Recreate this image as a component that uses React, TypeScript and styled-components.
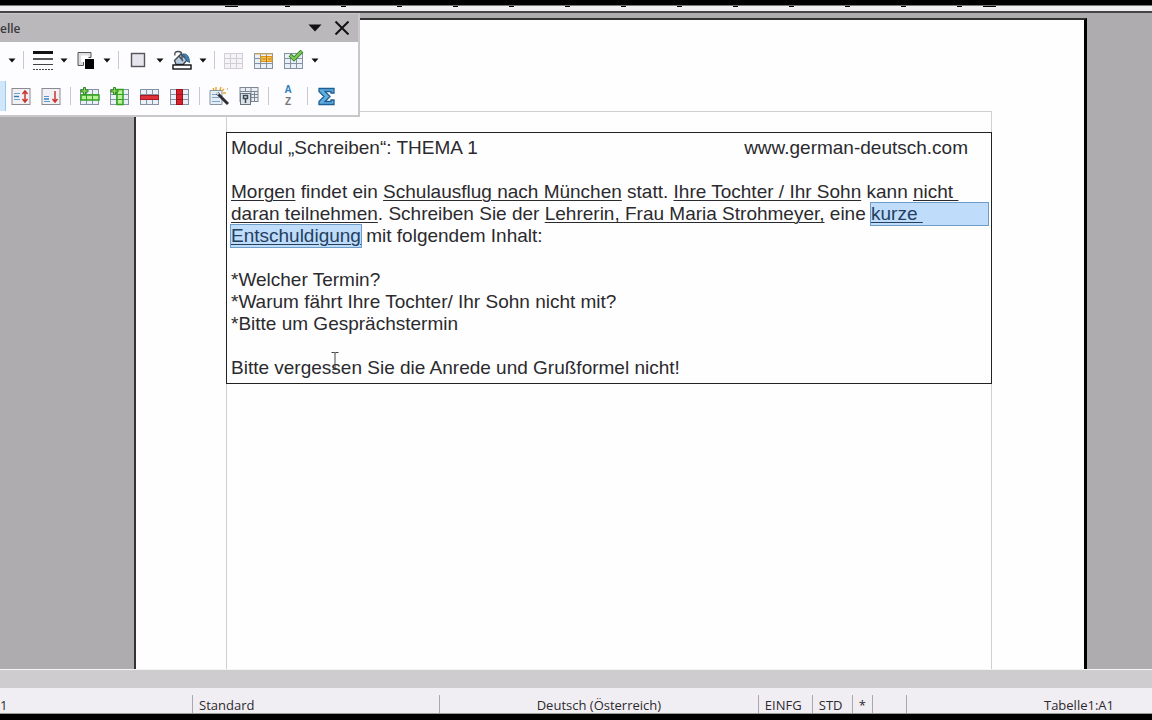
import React from "react";
import styled, { createGlobalStyle } from "styled-components";

const GlobalStyle = createGlobalStyle`
  * { box-sizing: border-box; }
  body { margin: 0; background: #000; }
`;

const uiFont = `"Open Sans", "Noto Sans", sans-serif`;

const Window = styled.div`
  position: relative;
  display: flex;
  flex-direction: column;
  min-height: 100vh;
  overflow: hidden;
  background: #aeacae;
  border-top: 5px solid #000;
  border-bottom: 6px solid #000;
`;

const Ruler = styled.div`
  height: 8px;
  flex: none;
  background: #f0eef0;
  border-top: 1px solid #777;
  border-bottom: 2px solid #444;
`;

const RulerMarks = styled.svg`
  display: block;
  width: 100%;
  height: 2px;
`;

const Workspace = styled.main`
  flex: 1;
  display: flex;
  padding: 5px 65px 0 134px;
  border-bottom: 1px solid #f4f4f4;
`;

const Sheet = styled.article`
  flex: 1;
  display: flex;
  padding: 91px 92px 0 90px;
  background: #fefefe;
  border: solid #333;
  border-width: 2px 3px 0 2px;
  border-right-color: #000;
`;

const TextArea = styled.div`
  flex: 1;
  padding-top: 20px;
  border: 1px solid #cfcfcf;
  border-bottom: 0;
`;

const TextTable = styled.table`
  width: calc(100% + 2px);
  margin: 0 -1px;
  border-collapse: separate;
  border-spacing: 0;
  border: 1px solid #222;
`;

const Cell = styled.td`
  padding: 4px 3px 4px 4px;
  font: 19px/22px "Liberation Sans", Arial, sans-serif;
  color: #2b2a2e;
`;

const Line = styled.p`
  display: flex;
  height: 22px;
  margin: 0;
  white-space: pre;
`;

const Site = styled.span`
  margin-left: auto;
  margin-right: 20px;
`;

const U = styled.span`
  text-decoration: underline;
  text-decoration-thickness: 1px;
  text-underline-offset: 2px;
`;

const Selected = styled.mark<{ $fill?: boolean }>`
  flex: ${(p) => (p.$fill ? "1" : "none")};
  color: #23405f;
  background: #bfdcfb;
  box-shadow: 0 0 0 1px #6d9cc8;
`;

const ScrollTrack = styled.div`
  height: 18px;
  flex: none;
  background: #cecccf;
`;

const StatusBar = styled.footer`
  display: flex;
  flex: none;
  height: 26px;
  padding-top: 7px;
  background: #f1eef3;
  border-bottom: 1px solid #999;
  font: 13px/20px ${uiFont};
  color: #2c2a2e;
  white-space: nowrap;
`;

const StatusCell = styled.div<{ $w?: number; $grow?: number; $align?: string }>`
  flex: ${(p) => (p.$grow ? `${p.$grow} 1 0` : `0 0 ${p.$w}px`)};
  padding: 0 6px;
  text-align: ${(p) => p.$align ?? "left"};
  border-right: 1px solid #aaa8ac;
  &:first-child { padding-left: 0; }
  &:last-child { padding-right: 38px; border-right: 0; }
`;

const FloatingToolbar = styled.section`
  position: absolute;
  left: 0;
  top: 8px;
  width: 360px;
  padding-bottom: 1px;
  background: #fdfcfe;
  border: solid #c9c7ca;
  border-width: 1px 2px 2px 0;
`;

const TitleBar = styled.header`
  display: flex;
  align-items: center;
  height: 28px;
  padding-right: 3px;
  background: #bab8bb;
`;

const Title = styled.h1`
  flex: 1;
  margin: 0;
  padding-top: 2px;
  font: 600 12px/20px ${uiFont};
  color: #3a383c;
`;

const TitleButton = styled.button`
  display: flex;
  align-items: center;
  justify-content: center;
  width: 27px;
  height: 24px;
  padding: 0;
  border: 0;
  background: none;
`;

const ToolRow = styled.div<{ $indent?: number }>`
  display: flex;
  align-items: center;
  height: 36px;
  padding-left: ${(p) => p.$indent ?? 0}px;
`;

const ToolButton = styled.button<{ $w?: number }>`
  display: flex;
  align-items: center;
  justify-content: center;
  flex: none;
  width: ${(p) => p.$w ?? 30}px;
  height: 30px;
  padding: 0;
  border: 0;
  background: none;
`;

const ActiveButton = styled(ToolButton)`
  background: #cfe6fb;
  border-right: 1px solid #9cc6ec;
`;

const SortButton = styled(ToolButton)`
  flex-direction: column;
`;

const SortLetter = styled.span<{ $color: string }>`
  display: block;
  font: 700 10px/12px "Liberation Sans", Arial, sans-serif;
  color: ${(p) => p.$color};
`;

const Divider = styled.span`
  width: 1px;
  height: 18px;
  margin: 0 4px;
  background: #cac8cc;
`;

const Pointer = styled.svg`
  position: absolute;
  left: 330px;
  top: 340px;
`;

const ticks = Array.from({ length: 13 }, (_, i) => `M${285 + i * 56} 0.5h5`).join("");

const DropArrow = ({ label }: { label: string }) => (
  <ToolButton $w={14} aria-label={label}>
    <svg width="8" height="5" viewBox="0 0 8 5"><path d="M0.5 0.5h7L4 4.500z" fill="#111" /></svg>
  </ToolButton>
);

const Icon = ({ children }: { children: React.ReactNode }) => (
  <svg width="20" height="20" viewBox="0 0 20 20" fill="none">{children}</svg>
);

const Grid = ({ line = "#8492a2", fill = "#e9f0f7" }: { line?: string; fill?: string }) => (
  <>
    <rect x="0.5" y="3.5" width="18" height="15" fill={fill} stroke={line} />
    <path d="M1 8.500h18M1 13.500h18M6.500 3v15M12.500 3v15" stroke={line} />
  </>
);

const Plus = () => (
  <path d="M3.500 1.500h2v2.500h2.500v2H5.500v2.500h-2V6H1V4h2.500z" fill="#8fd65c" stroke="#2f8a1e" />
);

const TableToolbar = () => (
  <FloatingToolbar aria-label="Tabelle">
    <TitleBar>
      <Title>elle</Title>
      <TitleButton aria-label="Menü">
        <svg width="14" height="8" viewBox="0 0 14 8"><path d="M0.500 0.500h13L7 7.500z" fill="#111" /></svg>
      </TitleButton>
      <TitleButton aria-label="Schließen">
        <svg width="16" height="14" viewBox="0 0 16 14"><path d="M1.500 0.500l13 13M14.500 0.500l-13 13" stroke="#111" strokeWidth="2" /></svg>
      </TitleButton>
    </TitleBar>
    <ToolRow $indent={5}>
      <DropArrow label="Tabelle einfügen" />
      <Divider />
      <ToolButton $w={29} aria-label="Umrandungsstil">
        <Icon>
          <path d="M0 2.500h20" stroke="#111" strokeWidth="3" />
          <path d="M0 9h20" stroke="#555" strokeWidth="2" />
          <path d="M0 14.500h20" stroke="#444" />
          <path d="M0 19.500h20" stroke="#444" strokeDasharray="2 1" />
        </Icon>
      </ToolButton>
      <DropArrow label="Umrandungsstil wählen" />
      <ToolButton $w={29} aria-label="Umrandungsfarbe">
        <Icon>
          <path d="M2 2.500h13v5H7.500v8H2z" fill="#dfdde2" stroke="#555" />
          <path d="M5 5.500h7.500V8H8v4H5z" fill="#fff" />
          <rect x="9" y="9" width="9" height="10" fill="#000" />
        </Icon>
      </ToolButton>
      <DropArrow label="Farbe wählen" />
      <Divider />
      <ToolButton $w={30} aria-label="Umrandung">
        <Icon><rect x="3.500" y="3.500" width="13" height="13" fill="#e6e4ec" stroke="#555" strokeWidth="1.400" /></Icon>
      </ToolButton>
      <DropArrow label="Umrandung wählen" />
      <ToolButton $w={29} aria-label="Hintergrundfarbe">
        <Icon>
          <path d="M2.500 10.500L9 4l6 6-4 4.500H4z" fill="#b6cadc" stroke="#3c4650" strokeWidth="1.300" />
          <path d="M3 5.500Q2 1.500 6 1.500t4 3.500v4M7 6l4 5" stroke="#444c55" strokeWidth="1.300" />
          <path d="M11 4q6-1 6.500 8.500-3-1-4-4z" fill="#3f81b8" stroke="#2f5f87" />
          <rect x="1" y="15" width="18" height="4" fill="#fff" stroke="#111" strokeWidth="1.400" />
        </Icon>
      </ToolButton>
      <DropArrow label="Hintergrund wählen" />
      <Divider />
      <ToolButton disabled aria-label="Zellen verbinden"><Icon><Grid line="#d2cfd4" fill="#f5f3f6" /></Icon></ToolButton>
      <ToolButton aria-label="Zellen teilen">
        <Icon>
          <Grid />
          <rect x="7" y="6.500" width="11" height="5" fill="#f8c24a" stroke="#dd9416" />
          <path d="M0.500 4h18" stroke="#e3b04e" />
          <path d="M12.500 6v6M8.500 9h3M14 9h3" stroke="#b8780f" />
        </Icon>
      </ToolButton>
      <ToolButton $w={29} aria-label="Tabelle optimieren">
        <Icon>
          <Grid />
          <path d="M6 5l4 4L18 1" stroke="#3c8a2d" strokeWidth="4" />
          <path d="M6.500 5.500L10 9l7.500-7.500" stroke="#80c958" strokeWidth="2" />
        </Icon>
      </ToolButton>
      <DropArrow label="Optimieren wählen" />
    </ToolRow>
    <ToolRow>
      <ActiveButton $w={6} aria-label="Oben" />
      <ToolButton aria-label="Vertikal zentrieren">
        <Icon>
          <rect x="1" y="2.500" width="18" height="16" fill="#f1f0f4" stroke="#8c8a90" />
          <path d="M3 7.500h6M3 13.500h6" stroke="#6aa5d6" />
          <path d="M3 10.500h5" stroke="#2c78b8" strokeWidth="1.400" />
          <path d="M14 5v11M11.500 8L14 5l2.500 3M11.500 13l2.500 3 2.500-3" stroke="#c9362d" strokeWidth="1.500" />
        </Icon>
      </ToolButton>
      <ToolButton aria-label="Unten">
        <Icon>
          <rect x="1" y="2.500" width="18" height="16" fill="#f1f0f4" stroke="#8c8a90" />
          <path d="M3 10.500h5M3 15.500h6" stroke="#5a9ad0" />
          <path d="M3 13h5" stroke="#2c78b8" strokeWidth="1.400" />
          <path d="M14 5v11M11.500 13l2.500 3 2.500-3" stroke="#c9362d" strokeWidth="1.500" />
        </Icon>
      </ToolButton>
      <Divider />
      <ToolButton aria-label="Zeile einfügen">
        <Icon>
          <Grid />
          <rect x="1" y="9" width="18" height="5" fill="#b9ee9a" stroke="#2fa31c" strokeWidth="1.500" />
          <path d="M6.500 9v5M12.500 9v5" stroke="#2fa31c" />
          <Plus />
        </Icon>
      </ToolButton>
      <ToolButton aria-label="Spalte einfügen">
        <Icon>
          <Grid />
          <rect x="7" y="3.500" width="6" height="15" fill="#b9ee9a" stroke="#2fa31c" strokeWidth="1.500" />
          <path d="M7 8.500h6M7 13.500h6" stroke="#2fa31c" />
          <Plus />
        </Icon>
      </ToolButton>
      <ToolButton aria-label="Zeile löschen">
        <Icon>
          <Grid />
          <rect x="0.500" y="9.500" width="18" height="4" fill="#e0303a" stroke="#ac1822" />
        </Icon>
      </ToolButton>
      <ToolButton aria-label="Spalte löschen">
        <Icon>
          <Grid />
          <rect x="6.500" y="3.500" width="6" height="15" fill="#d8202a" stroke="#9f1019" />
          <path d="M7 8.500h6M7 13.500h6" stroke="#9f1019" />
        </Icon>
      </ToolButton>
      <Divider />
      <ToolButton aria-label="AutoFormat">
        <Icon>
          <path d="M1 4.500h12v14H1z" fill="#e4edf6" stroke="#8795a4" />
          <path d="M3 8.500h5M3 11.500h7M3 15.500h8" stroke="#7fa5c8" />
          <path d="M8 7l11 11" stroke="#2d2d33" strokeWidth="3" />
          <path d="M7.500 6.500l2 2" stroke="#d8d6dc" strokeWidth="2" />
          <path d="M7 1v3M12 1l-1 3M15 3l-2 2M17 7h-3M4 2l1 2M18 3h1" stroke="#e2a527" strokeWidth="1.400" />
        </Icon>
      </ToolButton>
      <ToolButton aria-label="Tabelleneigenschaften">
        <Icon>
          <rect x="1" y="1.500" width="18" height="14" fill="#e9eef4" stroke="#7c8793" />
          <path d="M1 5.500h18M12 2v14M12 8.500h7M12 11.500h7M15.500 5v10M6.500 2v4" stroke="#7c8793" />
          <rect x="1.500" y="7.500" width="10" height="11" fill="#dde3eb" stroke="#6b7580" />
          <path d="M4.500 9.500h4v3h-4zM6.500 12v5" stroke="#3e4852" strokeWidth="1.500" />
        </Icon>
      </ToolButton>
      <Divider />
      <SortButton aria-label="Sortieren">
        <SortLetter $color="#2f7fbd">A</SortLetter>
        <SortLetter $color="#77757a">Z</SortLetter>
      </SortButton>
      <Divider />
      <ToolButton aria-label="Summe">
        <Icon>
          <path d="M2 2.500h15v4.500h-3V5.500H8l5 5-5 5h6V14h3v4.500H2v-3l5-5-5-5z" fill="#62aee0" stroke="#1f5f94" strokeWidth="1.300" />
        </Icon>
      </ToolButton>
    </ToolRow>
  </FloatingToolbar>
);

export default function App() {
  return (
    <>
      <GlobalStyle />
      <Window>
        <Ruler>
          <RulerMarks aria-hidden="true">
            <path d={`M225 0.5h13${ticks}M983 0.5h13`} stroke="#000" />
          </RulerMarks>
        </Ruler>
        <Workspace>
          <Sheet>
            <TextArea>
              <TextTable>
                <tbody>
                  <tr>
                    <Cell>
                      <Line>Modul „Schreiben“: THEMA 1<Site>www.german-deutsch.com</Site></Line>
                      <Line />
                      <Line><U>Morgen</U> findet ein <U>Schulausflug nach München</U> statt. <U>Ihre Tochter / Ihr Sohn</U> kann <U>nicht </U></Line>
                      <Line><U>daran teilnehmen</U>. Schreiben Sie der <U>Lehrerin, Frau Maria Strohmeyer,</U> eine <Selected $fill><U>kurze </U></Selected></Line>
                      <Line><Selected><U>Entschuldigung</U></Selected> mit folgendem Inhalt:</Line>
                      <Line />
                      <Line>*Welcher Termin?</Line>
                      <Line>*Warum fährt Ihre Tochter/ Ihr Sohn nicht mit?</Line>
                      <Line>*Bitte um Gesprächstermin</Line>
                      <Line />
                      <Line>Bitte vergessen Sie die Anrede und Grußformel nicht!</Line>
                    </Cell>
                  </tr>
                </tbody>
              </TextTable>
            </TextArea>
          </Sheet>
        </Workspace>
        <ScrollTrack />
        <StatusBar>
          <StatusCell $w={193}>1</StatusCell>
          <StatusCell $w={247}>Standard</StatusCell>
          <StatusCell $grow={1} $align="center">Deutsch (Österreich)</StatusCell>
          <StatusCell $w={54}>EINFG</StatusCell>
          <StatusCell $w={40}>STD</StatusCell>
          <StatusCell $w={20}>*</StatusCell>
          <StatusCell $w={34} />
          <StatusCell $w={245} $align="right">Tabelle1:A1</StatusCell>
        </StatusBar>
        <TableToolbar />
        <Pointer width="10" height="26" viewBox="0 0 10 26" fill="none" aria-hidden="true">
          <path d="M1.500 7.500h3l0.500 1 0.500-1h3M5 8.500v15M2.500 24.500h5" stroke="#444" />
        </Pointer>
      </Window>
    </>
  );
}
